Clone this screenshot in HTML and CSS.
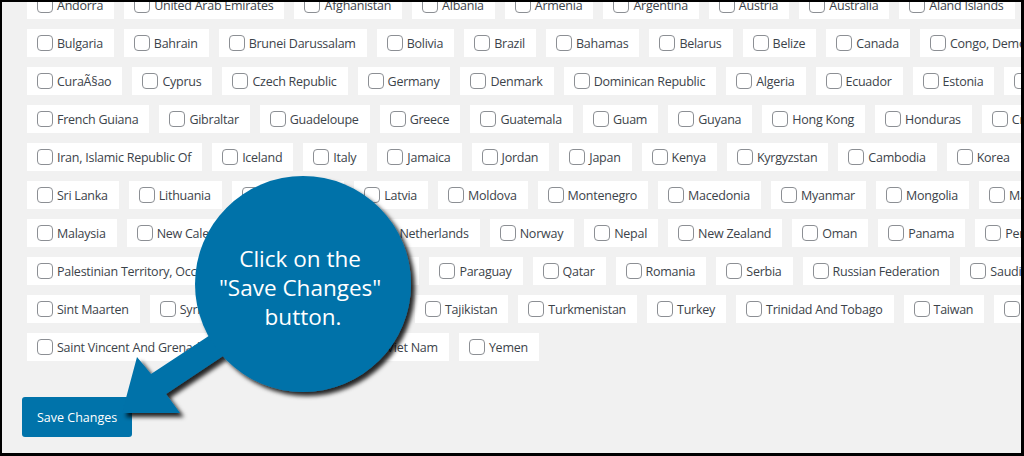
FILE: index.html
```html
<!DOCTYPE html>
<html lang="en">
<head>
    <meta charset="UTF-8">
    <meta name="viewport" content="width=device-width, initial-scale=1.0">
    <title>Countries - Save Changes</title>
    <link rel="stylesheet" href="styles.css">
</head>
<body>
    <div class="frame">
        <div class="countries">
            <div class="row">
                <label class="chip"><input type="checkbox">Andorra</label>
                <label class="chip"><input type="checkbox">United Arab Emirates</label>
                <label class="chip"><input type="checkbox">Afghanistan</label>
                <label class="chip"><input type="checkbox">Albania</label>
                <label class="chip"><input type="checkbox">Armenia</label>
                <label class="chip"><input type="checkbox">Argentina</label>
                <label class="chip"><input type="checkbox">Austria</label>
                <label class="chip"><input type="checkbox">Australia</label>
                <label class="chip"><input type="checkbox">Aland Islands</label>
            </div>
            <div class="row">
                <label class="chip"><input type="checkbox">Bulgaria</label>
                <label class="chip"><input type="checkbox">Bahrain</label>
                <label class="chip"><input type="checkbox">Brunei Darussalam</label>
                <label class="chip"><input type="checkbox">Bolivia</label>
                <label class="chip"><input type="checkbox">Brazil</label>
                <label class="chip"><input type="checkbox">Bahamas</label>
                <label class="chip"><input type="checkbox">Belarus</label>
                <label class="chip"><input type="checkbox">Belize</label>
                <label class="chip"><input type="checkbox">Canada</label>
                <label class="chip"><input type="checkbox">Congo, Democratic Republic</label>
            </div>
            <div class="row">
                <label class="chip"><input type="checkbox">CuraÃ§ao</label>
                <label class="chip"><input type="checkbox">Cyprus</label>
                <label class="chip"><input type="checkbox">Czech Republic</label>
                <label class="chip"><input type="checkbox">Germany</label>
                <label class="chip"><input type="checkbox">Denmark</label>
                <label class="chip"><input type="checkbox">Dominican Republic</label>
                <label class="chip"><input type="checkbox">Algeria</label>
                <label class="chip"><input type="checkbox">Ecuador</label>
                <label class="chip"><input type="checkbox">Estonia</label>
                <label class="chip"><input type="checkbox">Egypt</label>
            </div>
            <div class="row">
                <label class="chip"><input type="checkbox">French Guiana</label>
                <label class="chip"><input type="checkbox">Gibraltar</label>
                <label class="chip"><input type="checkbox">Guadeloupe</label>
                <label class="chip"><input type="checkbox">Greece</label>
                <label class="chip"><input type="checkbox">Guatemala</label>
                <label class="chip"><input type="checkbox">Guam</label>
                <label class="chip"><input type="checkbox">Guyana</label>
                <label class="chip"><input type="checkbox">Hong Kong</label>
                <label class="chip"><input type="checkbox">Honduras</label>
                <label class="chip"><input type="checkbox">Croatia</label>
            </div>
            <div class="row">
                <label class="chip"><input type="checkbox">Iran, Islamic Republic Of</label>
                <label class="chip"><input type="checkbox">Iceland</label>
                <label class="chip"><input type="checkbox">Italy</label>
                <label class="chip"><input type="checkbox">Jamaica</label>
                <label class="chip"><input type="checkbox">Jordan</label>
                <label class="chip"><input type="checkbox">Japan</label>
                <label class="chip"><input type="checkbox">Kenya</label>
                <label class="chip"><input type="checkbox">Kyrgyzstan</label>
                <label class="chip"><input type="checkbox">Cambodia</label>
                <label class="chip"><input type="checkbox">Korea</label>
            </div>
            <div class="row">
                <label class="chip"><input type="checkbox">Sri Lanka</label>
                <label class="chip"><input type="checkbox">Lithuania</label>
                <label class="chip"><input type="checkbox">Luxembourg</label>
                <label class="chip"><input type="checkbox">Latvia</label>
                <label class="chip"><input type="checkbox">Moldova</label>
                <label class="chip"><input type="checkbox">Montenegro</label>
                <label class="chip"><input type="checkbox">Macedonia</label>
                <label class="chip"><input type="checkbox">Myanmar</label>
                <label class="chip"><input type="checkbox">Mongolia</label>
                <label class="chip"><input type="checkbox">Martinique</label>
            </div>
            <div class="row">
                <label class="chip"><input type="checkbox">Malaysia</label>
                <label class="chip"><input type="checkbox">New Caledonia</label>
                <label class="chip"><input type="checkbox">Nicaragua</label>
                <label class="chip"><input type="checkbox">Netherlands</label>
                <label class="chip"><input type="checkbox">Norway</label>
                <label class="chip"><input type="checkbox">Nepal</label>
                <label class="chip"><input type="checkbox">New Zealand</label>
                <label class="chip"><input type="checkbox">Oman</label>
                <label class="chip"><input type="checkbox">Panama</label>
                <label class="chip"><input type="checkbox">Peru</label>
            </div>
            <div class="row">
                <label class="chip"><input type="checkbox">Palestinian Territory, Occupied</label>
                <label class="chip"><input type="checkbox">Sao Tome And Principe</label>
                <label class="chip"><input type="checkbox">Paraguay</label>
                <label class="chip"><input type="checkbox">Qatar</label>
                <label class="chip"><input type="checkbox">Romania</label>
                <label class="chip"><input type="checkbox">Serbia</label>
                <label class="chip"><input type="checkbox">Russian Federation</label>
                <label class="chip"><input type="checkbox">Saudi Arabia</label>
            </div>
            <div class="row">
                <label class="chip"><input type="checkbox">Sint Maarten</label>
                <label class="chip"><input type="checkbox">Syrian Arab Republic</label>
                <label class="chip"><input type="checkbox">Thailand</label>
                <label class="chip"><input type="checkbox">Tajikistan</label>
                <label class="chip"><input type="checkbox">Turkmenistan</label>
                <label class="chip"><input type="checkbox">Turkey</label>
                <label class="chip"><input type="checkbox">Trinidad And Tobago</label>
                <label class="chip"><input type="checkbox">Taiwan</label>
                <label class="chip"><input type="checkbox">Tanzania</label>
            </div>
            <div class="row">
                <label class="chip"><input type="checkbox">Saint Vincent And Grenadines</label>
                <label class="chip"><input type="checkbox">Uzbekistan</label>
                <label class="chip"><input type="checkbox">Viet Nam</label>
                <label class="chip"><input type="checkbox">Yemen</label>
            </div>
        </div>

        <button class="save">Save Changes</button>

        <!-- Callout pointing at the button -->
        <svg class="callout" width="1024" height="456" viewBox="0 0 1024 456">
            <defs>
                <filter id="shade" x="-20%" y="-20%" width="140%" height="140%">
                    <feDropShadow dx="4" dy="4" stdDeviation="2" flood-color="#000" flood-opacity="0.85"/>
                </filter>
            </defs>
            <g filter="url(#shade)" fill="#0672a9">
                <polygon points="233,320 247,340 166,394 180,413 122,413 137,357 151,374"/>
                <circle cx="303" cy="284" r="108"/>
            </g>
            <text class="callout-text" text-anchor="middle">
                <tspan x="303" y="267">Click on the</tspan>
                <tspan x="303" y="296">"Save Changes"</tspan>
                <tspan x="303" y="325">button.</tspan>
            </text>
        </svg>
    </div>
</body>
</html>
```

FILE: styles.css
```css
body {
    margin: 0;
    background: #000;
    font-family: 'Open Sans', 'Noto Sans', sans-serif;
}
.frame {
    position: relative;
    box-sizing: border-box;
    height: 456px;
    border: 2px solid #000;
    border-right-width: 3px;
    border-bottom-width: 3px;
    background: #f1f1f1;
    overflow: hidden;
}
.countries {
    display: flex;
    flex-direction: column;
    gap: 10px;
    margin-top: -11px;
    padding-left: 25px;
}
.row {
    display: flex;
    gap: 10px;
    white-space: nowrap;
}
.chip {
    display: flex;
    align-items: center;
    gap: 4px;
    flex-shrink: 0;
    height: 28px;
    padding: 0 11px 0 10px;
    background: #fff;
    color: #3c434a;
    font-size: 12.5px;
    letter-spacing: -0.25px;
}
.chip input {
    appearance: none;
    -webkit-appearance: none;
    width: 16px;
    height: 16px;
    margin: 0;
    border: 1px solid #8c8f94;
    border-radius: 4px;
    background: #fff;
}
.save {
    display: block;
    margin: 36px 0 0 20px;
    height: 40px;
    padding: 0 15px;
    border: none;
    border-radius: 3px;
    background: #0073aa;
    color: #fff;
    font-family: 'Open Sans', 'Noto Sans', sans-serif;
    font-size: 12.5px;
}
.callout {
    position: absolute;
    top: -2px;
    left: -2px;
}
.callout-text {
    fill: #fff;
    font-family: 'Open Sans', sans-serif;
    font-size: 22.5px;
}
```
